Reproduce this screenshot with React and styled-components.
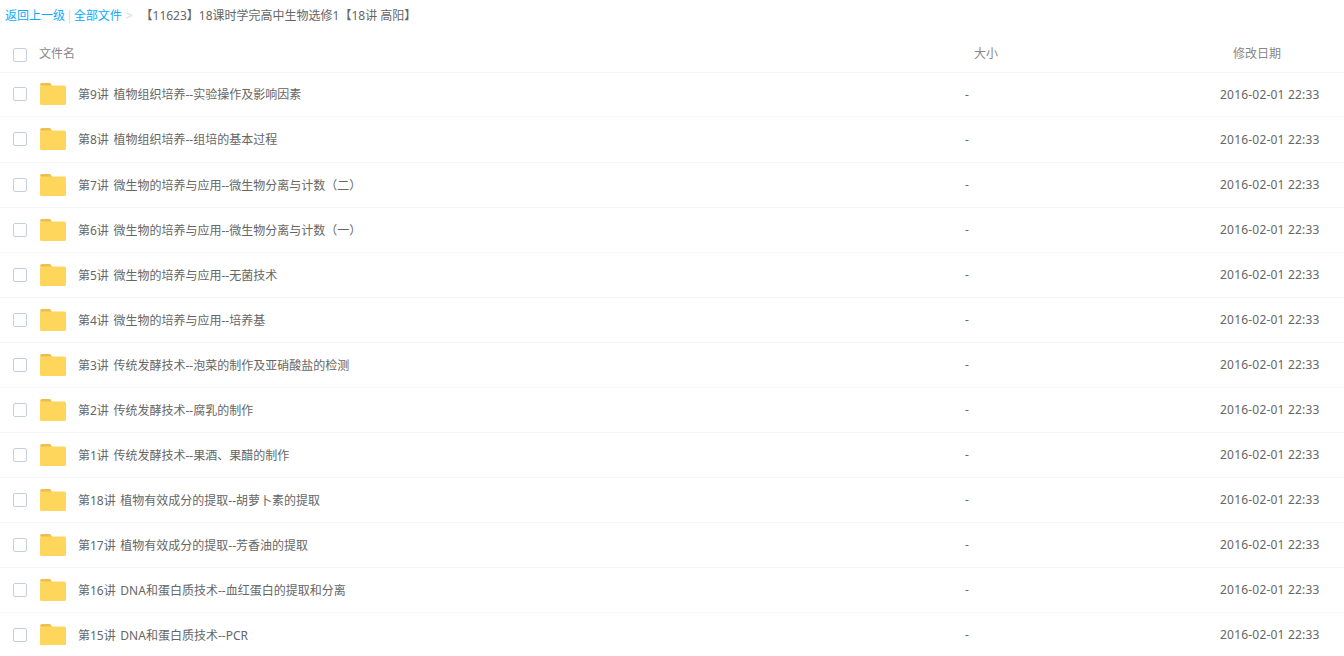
import React from 'react';
import styled, { createGlobalStyle } from 'styled-components';

const Global = createGlobalStyle`
  html, body { margin: 0; background: #fff; }
  body { font-family: "Noto Sans", "Noto Sans CJK SC", sans-serif; font-size: 12px; }
`;

const Page = styled.div`
  width: 1344px;
  height: 645px;
  overflow: hidden;
`;

const Crumbs = styled.div`
  display: flex;
  align-items: center;
  height: 30px;
  padding-left: 5px;
  color: #666;
  white-space: nowrap;
`;

const CrumbLink = styled.span`
  color: #09aaff;
`;

const CrumbBar = styled.span`
  color: #c5d8f3;
  margin: 0 1px 0 1px;
`;

const CrumbArrow = styled.span`
  color: #c5d8f3;
  margin: 0 8px 0 4px;
`;

const Grid = styled.div`
  display: grid;
  grid-template-columns: 13px 14px 13px 26px 12px 887px 255px 1fr;
  align-items: center;
  border-bottom: 1px solid #f4f6fa;
  box-sizing: border-box;
`;

const HeadRow = styled(Grid)`
  height: 43px;
  padding-top: 4px;
  color: #888;
`;

const Row = styled(Grid)`
  height: ${p => p.$h}px;
  padding-bottom: 1px;
  color: #666;
`;

const Box = styled.span`
  grid-column: 2;
  display: block;
  width: 14px;
  height: 14px;
  box-sizing: border-box;
  border: 1px solid #c3cede;
  border-radius: 2px;
  background: #fff;
`;

const HeadBox = styled(Box)`
  margin-top: 4px;
`;

const HeadName = styled.span`
  grid-column: 3 / 7;
  padding-left: 12px;
`;

const HeadSize = styled.span`
  grid-column: 7;
  padding-left: 9px;
`;

const HeadDate = styled.span`
  grid-column: 8;
  padding-left: 13px;
`;

const Icon = styled.svg`
  grid-column: 4;
  display: block;
  width: 26px;
  height: 22px;
`;

const Name = styled.span`
  grid-column: 6;
  word-spacing: 1.5px;
  white-space: nowrap;
`;

const Size = styled.span`
  grid-column: 7;
`;

const Date = styled.span`
  grid-column: 8;
  letter-spacing: 0.2px;
  white-space: nowrap;
`;

const Folder = () => (
  <Icon viewBox="0 0 26 22">
    <path d="M0 2a2 2 0 0 1 2-2h7a2 2 0 0 1 2 1.2L12 3H1z" fill="#edbd4f" />
    <path d="M0 4a1.5 1.5 0 0 1 1.5-1.5h23A1.5 1.5 0 0 1 26 4v16.5a1.5 1.5 0 0 1-1.5 1.5h-23A1.5 1.5 0 0 1 0 20.5z" fill="#ffd65c" />
  </Icon>
);

const files = [
  '第9讲 植物组织培养--实验操作及影响因素',
  '第8讲 植物组织培养--组培的基本过程',
  '第7讲 微生物的培养与应用--微生物分离与计数（二）',
  '第6讲 微生物的培养与应用--微生物分离与计数（一）',
  '第5讲 微生物的培养与应用--无菌技术',
  '第4讲 微生物的培养与应用--培养基',
  '第3讲 传统发酵技术--泡菜的制作及亚硝酸盐的检测',
  '第2讲 传统发酵技术--腐乳的制作',
  '第1讲 传统发酵技术--果酒、果醋的制作',
  '第18讲 植物有效成分的提取--胡萝卜素的提取',
  '第17讲 植物有效成分的提取--芳香油的提取',
  '第16讲 DNA和蛋白质技术--血红蛋白的提取和分离',
  '第15讲 DNA和蛋白质技术--PCR',
];

export default function App() {
  return (
    <Page>
      <Global />
      <Crumbs>
        <CrumbLink>返回上一级</CrumbLink>
        <CrumbBar>|</CrumbBar>
        <CrumbLink>全部文件</CrumbLink>
        <CrumbArrow>&gt;</CrumbArrow>
        <span>【11623】18课时学完高中生物选修1【18讲 高阳】</span>
      </Crumbs>
      <HeadRow>
        <HeadBox />
        <HeadName>文件名</HeadName>
        <HeadSize>大小</HeadSize>
        <HeadDate>修改日期</HeadDate>
      </HeadRow>
      {files.map((f, i) => (
        <Row key={f} $h={i === 0 ? 44 : i === 1 ? 46 : 45}>
          <Box />
          <Folder />
          <Name>{f}</Name>
          <Size>-</Size>
          <Date>2016-02-01 22:33</Date>
        </Row>
      ))}
    </Page>
  );
}
